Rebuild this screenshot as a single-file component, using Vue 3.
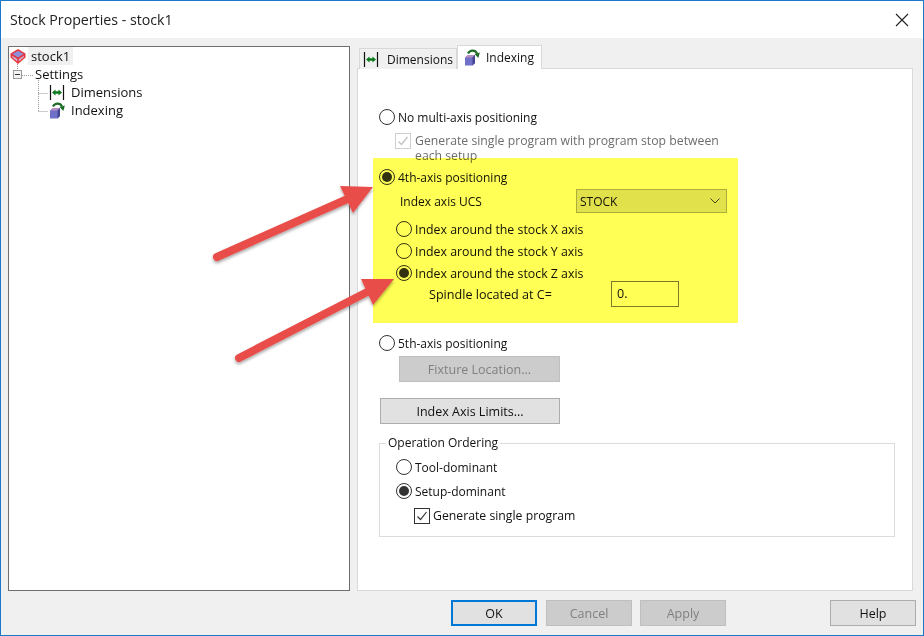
<template>
  <div class="dialog">
    <div class="titlebar">
      <span class="title">Stock Properties - stock1</span>
      <svg class="close" width="14" height="14" viewBox="0 0 14 14">
        <path d="M1 1 L13 13 M13 1 L1 13" stroke="#222" stroke-width="1.1" fill="none" />
      </svg>
    </div>

    <div class="body">
      <div class="tree">
        <svg class="tree-lines" width="60" height="80" viewBox="0 0 60 80">
          <path d="M8.5 17 V24 M13 28.5 H25 M29.5 33 V64.5 M29.5 46.5 H39 M29.5 64.5 H39" stroke="#9a9a9a" stroke-width="1" stroke-dasharray="1 1" fill="none" />
        </svg>
        <div class="tree-row root">
          <svg width="16" height="17" viewBox="0 0 16 17">
            <path d="M8 1 L15.5 5.5 V9.5 L8 16 L0.5 9.5 V5.5 Z" fill="#e8343c" />
            <path d="M8 2.8 L13.6 6 L8 9.6 L2.4 6 Z" fill="#8c8fd6" />
            <path d="M2.2 7.8 L7.2 11 V13.6 L2.2 9.2 Z M13.8 7.8 L8.8 11 V13.6 L13.8 9.2 Z" fill="#c9b6d8" />
          </svg>
          <span class="selected">stock1</span>
        </div>
        <div class="tree-row level1">
          <span class="expander"><i></i></span>
          <span>Settings</span>
        </div>
        <div class="tree-row level2">
          <svg class="icon" width="16" height="15" viewBox="0 0 16 15">
            <path d="M1.5 0 V15 M14.5 0 V15" stroke="#111" stroke-width="1.2" />
            <path d="M3 7.5 L6.5 4.4 V6.3 H9.5 V4.4 L13 7.5 L9.5 10.6 V8.7 H6.5 V10.6 Z" fill="#0c7a1c" />
          </svg>
          <span>Dimensions</span>
        </div>
        <div class="tree-row level2">
          <svg class="icon" width="16" height="17" viewBox="0 0 16 17">
            <path d="M1 8.5 L4 6 H11 V14 L8.5 16.5 H1 Z" fill="#6f70c8" />
            <path d="M1 8.5 L4 6 H11 L8.5 8.5 Z" fill="#b58cc0" />
            <path d="M8.5 8.5 L11 6 V14 L8.5 16.5 Z" fill="#43448f" />
            <path d="M4 4.5 C6 1 11 0.5 13 4.5" stroke="#1c6b26" stroke-width="2.2" fill="none" />
            <path d="M10.5 5 L15.8 3.6 L14.4 9 Z" fill="#1c6b26" />
          </svg>
          <span>Indexing</span>
        </div>
      </div>

      <div class="sheet">
        <div class="tabs">
          <div class="tab">
            <svg width="16" height="15" viewBox="0 0 16 15">
              <path d="M1.5 0 V15 M14.5 0 V15" stroke="#111" stroke-width="1.2" />
              <path d="M3 7.5 L6.5 4.4 V6.3 H9.5 V4.4 L13 7.5 L9.5 10.6 V8.7 H6.5 V10.6 Z" fill="#0c7a1c" />
            </svg>
            Dimensions
          </div>
          <div class="tab active">
            <svg width="16" height="17" viewBox="0 0 16 17">
              <path d="M1 8.5 L4 6 H11 V14 L8.5 16.5 H1 Z" fill="#6f70c8" />
              <path d="M1 8.5 L4 6 H11 L8.5 8.5 Z" fill="#b58cc0" />
              <path d="M8.5 8.5 L11 6 V14 L8.5 16.5 Z" fill="#43448f" />
              <path d="M4 4.5 C6 1 11 0.5 13 4.5" stroke="#1c6b26" stroke-width="2.2" fill="none" />
              <path d="M10.5 5 L15.8 3.6 L14.4 9 Z" fill="#1c6b26" />
            </svg>
            Indexing
          </div>
        </div>

        <div class="page">
          <label class="radio-row"><span class="radio"></span>No multi-axis positioning</label>
          <div class="check-row disabled">
            <span class="check off">
              <svg width="14" height="14" viewBox="0 0 14 14"><path d="M2.5 7.5 L5.5 10.5 L11.5 3" stroke="#c4c4c4" stroke-width="1.4" fill="none" /></svg>
            </span>
            <span class="wrap">Generate single program with program stop between each setup</span>
          </div>

          <label class="radio-row mt4"><span class="radio on"></span>4th-axis positioning</label>
          <div class="ucs-row">
            <span>Index axis UCS</span>
            <div class="combo">
              <span>STOCK</span>
              <svg width="10" height="6" viewBox="0 0 10 6"><path d="M0.5 0.5 L5 5 L9.5 0.5" stroke="#444" stroke-width="1" fill="none" /></svg>
            </div>
          </div>
          <label class="radio-row sub first"><span class="radio"></span>Index around the stock X axis</label>
          <label class="radio-row sub"><span class="radio"></span>Index around the stock Y axis</label>
          <label class="radio-row sub"><span class="radio on"></span>Index around the stock Z axis</label>
          <div class="spindle-row">
            <span>Spindle located at C=</span>
            <div class="value">0.</div>
          </div>

          <label class="radio-row mt28"><span class="radio"></span>5th-axis positioning</label>
          <button class="btn fixture" disabled>Fixture Location...</button>
          <button class="btn limits">Index Axis Limits...</button>

          <fieldset class="group">
            <legend>Operation Ordering</legend>
            <label class="radio-row"><span class="radio"></span>Tool-dominant</label>
            <label class="radio-row gap8"><span class="radio on"></span>Setup-dominant</label>
            <div class="check-row single">
              <span class="check">
                <svg width="14" height="14" viewBox="0 0 14 14"><path d="M2.5 7.5 L5.5 10.5 L11.5 3" stroke="#333" stroke-width="1.2" fill="none" /></svg>
              </span>
              Generate single program
            </div>
          </fieldset>
        </div>
      </div>
    </div>

    <div class="footer">
      <button class="btn default">OK</button>
      <button class="btn" disabled>Cancel</button>
      <button class="btn" disabled>Apply</button>
      <button class="btn help">Help</button>
    </div>

    <div class="highlight"></div>

    <svg class="arrows" width="924" height="636" viewBox="0 0 924 636">
      <defs>
        <filter id="arrow-shadow" x="-20%" y="-20%" width="140%" height="140%">
          <feDropShadow dx="0" dy="2" stdDeviation="1.5" flood-color="#000" flood-opacity="0.35" />
        </filter>
      </defs>
      <g v-for="a in arrows" :key="a.id" filter="url(#arrow-shadow)">
        <path :d="a.tail" stroke="#e94e4a" stroke-width="8" stroke-linecap="round" fill="none" />
        <path :d="a.head" fill="#e94e4a" />
      </g>
    </svg>
  </div>
</template>

<script setup>
const arrows = [
  { id: 1, tail: 'M217 257 L352 197', head: 'M373 187 L340 186 L353 213 Z' },
  { id: 2, tail: 'M239 358 L375 288', head: 'M394 279 L361 279 L373 305 Z' }
]
</script>

<style>
html, body {
  margin: 0;
  padding: 0;
  background: #fff;
}
</style>

<style scoped>
.dialog {
  position: relative;
  width: 924px;
  height: 636px;
  box-sizing: border-box;
  border: 1px solid #1a7ac8;
  background: #f0f0f0;
  display: flex;
  flex-direction: column;
  font-family: "Open Sans", "Noto Sans", sans-serif;
  font-size: 12px;
  color: #111;
  overflow: hidden;
}

.titlebar {
  height: 37px;
  background: #fff;
  display: flex;
  align-items: center;
  justify-content: space-between;
  padding: 0 14px 0 9px;
  flex-shrink: 0;
}

.title {
  font-size: 14.2px;
  color: #222;
}

.body {
  display: flex;
  gap: 7px;
  padding: 8px 7px 0 7px;
  height: 553px;
  box-sizing: border-box;
}

.tree {
  position: relative;
  width: 342px;
  box-sizing: border-box;
  border: 1px solid #6e6e6e;
  background: #fff;
  flex-shrink: 0;
  font-size: 13px;
}

.tree-lines {
  position: absolute;
  left: 0;
  top: 0;
}

.tree-row {
  position: relative;
  height: 18px;
  display: flex;
  align-items: center;
}

.root {
  padding-left: 1px;
}

.selected {
  background: #f0f0f0;
  padding: 0 3px;
  height: 18px;
  line-height: 18px;
  margin-left: 2px;
}

.level1 {
  padding-left: 4px;
}

.expander {
  width: 9px;
  height: 9px;
  box-sizing: border-box;
  border: 1px solid #9a9a9a;
  background: #f4f4f4;
  display: flex;
  align-items: center;
  justify-content: center;
  margin-right: 13px;
}

.expander i {
  display: block;
  width: 5px;
  height: 1px;
  background: #333;
}

.level2 {
  padding-left: 40px;
}

.icon {
  margin-right: 6px;
}

.sheet {
  flex: 1;
  display: flex;
  flex-direction: column;
  min-width: 0;
  padding-right: 3px;
}

.tabs {
  display: flex;
  align-items: flex-end;
  height: 23px;
  padding-left: 2px;
  margin-bottom: -1px;
  position: relative;
}

.tab {
  height: 21px;
  width: 98px;
  box-sizing: border-box;
  border: 1px solid #d9d9d9;
  border-bottom: none;
  background: #f0f0f0;
  display: flex;
  align-items: center;
  gap: 8px;
  padding-left: 3px;
}

.tab.active {
  height: 24px;
  width: 85px;
  background: #fff;
  padding-left: 6px;
  gap: 6px;
  padding-bottom: 1px;
  position: relative;
  z-index: 1;
}

.page {
  flex: 1;
  box-sizing: border-box;
  border: 1px solid #d9d9d9;
  background: #fff;
  padding: 40px 20px 0 21px;
  display: flex;
  flex-direction: column;
  align-items: flex-start;
}

.radio-row {
  height: 16px;
  display: flex;
  align-items: center;
  gap: 3px;
  white-space: nowrap;
}

.radio {
  width: 16px;
  height: 16px;
  box-sizing: border-box;
  border: 1px solid #333;
  border-radius: 50%;
  background: #fff;
  display: flex;
  align-items: center;
  justify-content: center;
  flex-shrink: 0;
}

.radio.on::after {
  content: "";
  width: 10px;
  height: 10px;
  border-radius: 50%;
  background: #333;
}

.check-row {
  display: flex;
  gap: 3px;
  margin-left: 16px;
  margin-top: 8px;
}

.check-row.disabled {
  color: #6d6d6d;
  line-height: 15px;
  font-size: 12.25px;
}

.wrap {
  width: 315px;
  margin-left: 1px;
}

.check {
  width: 16px;
  height: 16px;
  box-sizing: border-box;
  border: 1px solid #333;
  background: #fff;
  display: flex;
  align-items: center;
  justify-content: center;
  flex-shrink: 0;
}

.check.off {
  border-color: #cfcfcf;
}

.mt4 {
  margin-top: 6px;
}

.ucs-row {
  display: flex;
  align-items: center;
  height: 24px;
  margin-top: 4px;
  padding-left: 21px;
  width: 348px;
  box-sizing: border-box;
  justify-content: space-between;
}

.combo {
  width: 151px;
  height: 24px;
  box-sizing: border-box;
  border: 1px solid #adadad;
  background: #e1e1e1;
  display: flex;
  align-items: center;
  justify-content: space-between;
  padding: 0 6px 0 3px;
}

.sub {
  margin-left: 17px;
  margin-top: 6px;
  font-size: 12.35px;
}

.sub.first {
  margin-top: 8px;
}

.spindle-row {
  display: flex;
  align-items: center;
  height: 26px;
  margin-left: 50px;
  width: 250px;
  justify-content: space-between;
  font-size: 12.6px;
}

.value {
  width: 68px;
  height: 26px;
  box-sizing: border-box;
  border: 1px solid #7a7a7a;
  padding: 3px 5px;
  background: #fff;
}

.mt28 {
  margin-top: 28px;
}

.btn {
  height: 26px;
  width: 86px;
  box-sizing: border-box;
  border: 1px solid #adadad;
  background: #e1e1e1;
  font-family: inherit;
  font-size: 12.5px;
  color: #111;
  padding: 0;
}

.btn:disabled {
  background: #cccccc;
  border-color: #bfbfbf;
  color: #808080;
}

.fixture {
  width: 161px;
  margin-left: 20px;
  margin-top: 5px;
}

.limits {
  width: 180px;
  margin-left: 1px;
  margin-top: 16px;
}

.group {
  width: 516px;
  box-sizing: border-box;
  margin: 11px 0 0 0;
  padding: 8px 16px 12px;
  border: 1px solid #dcdcdc;
  min-width: 0;
}

.group legend {
  padding: 0 2px;
  margin-left: -10px;
  height: 16px;
  line-height: 16px;
}

.gap8 {
  margin-top: 8px;
}

.single {
  align-items: center;
  margin-top: 8px;
  margin-left: 18px;
  font-size: 12.25px;
}

.footer {
  display: flex;
  gap: 8px;
  padding: 9px 7px 0 450px;
}

.default {
  border: 2px solid #0078d7;
  margin-right: 1px;
}

.help {
  margin-left: auto;
}

.highlight {
  position: absolute;
  left: 372px;
  top: 157px;
  width: 365px;
  height: 165px;
  background: #ffff55;
  mix-blend-mode: multiply;
}

.arrows {
  position: absolute;
  left: -1px;
  top: -1px;
  pointer-events: none;
}
</style>
